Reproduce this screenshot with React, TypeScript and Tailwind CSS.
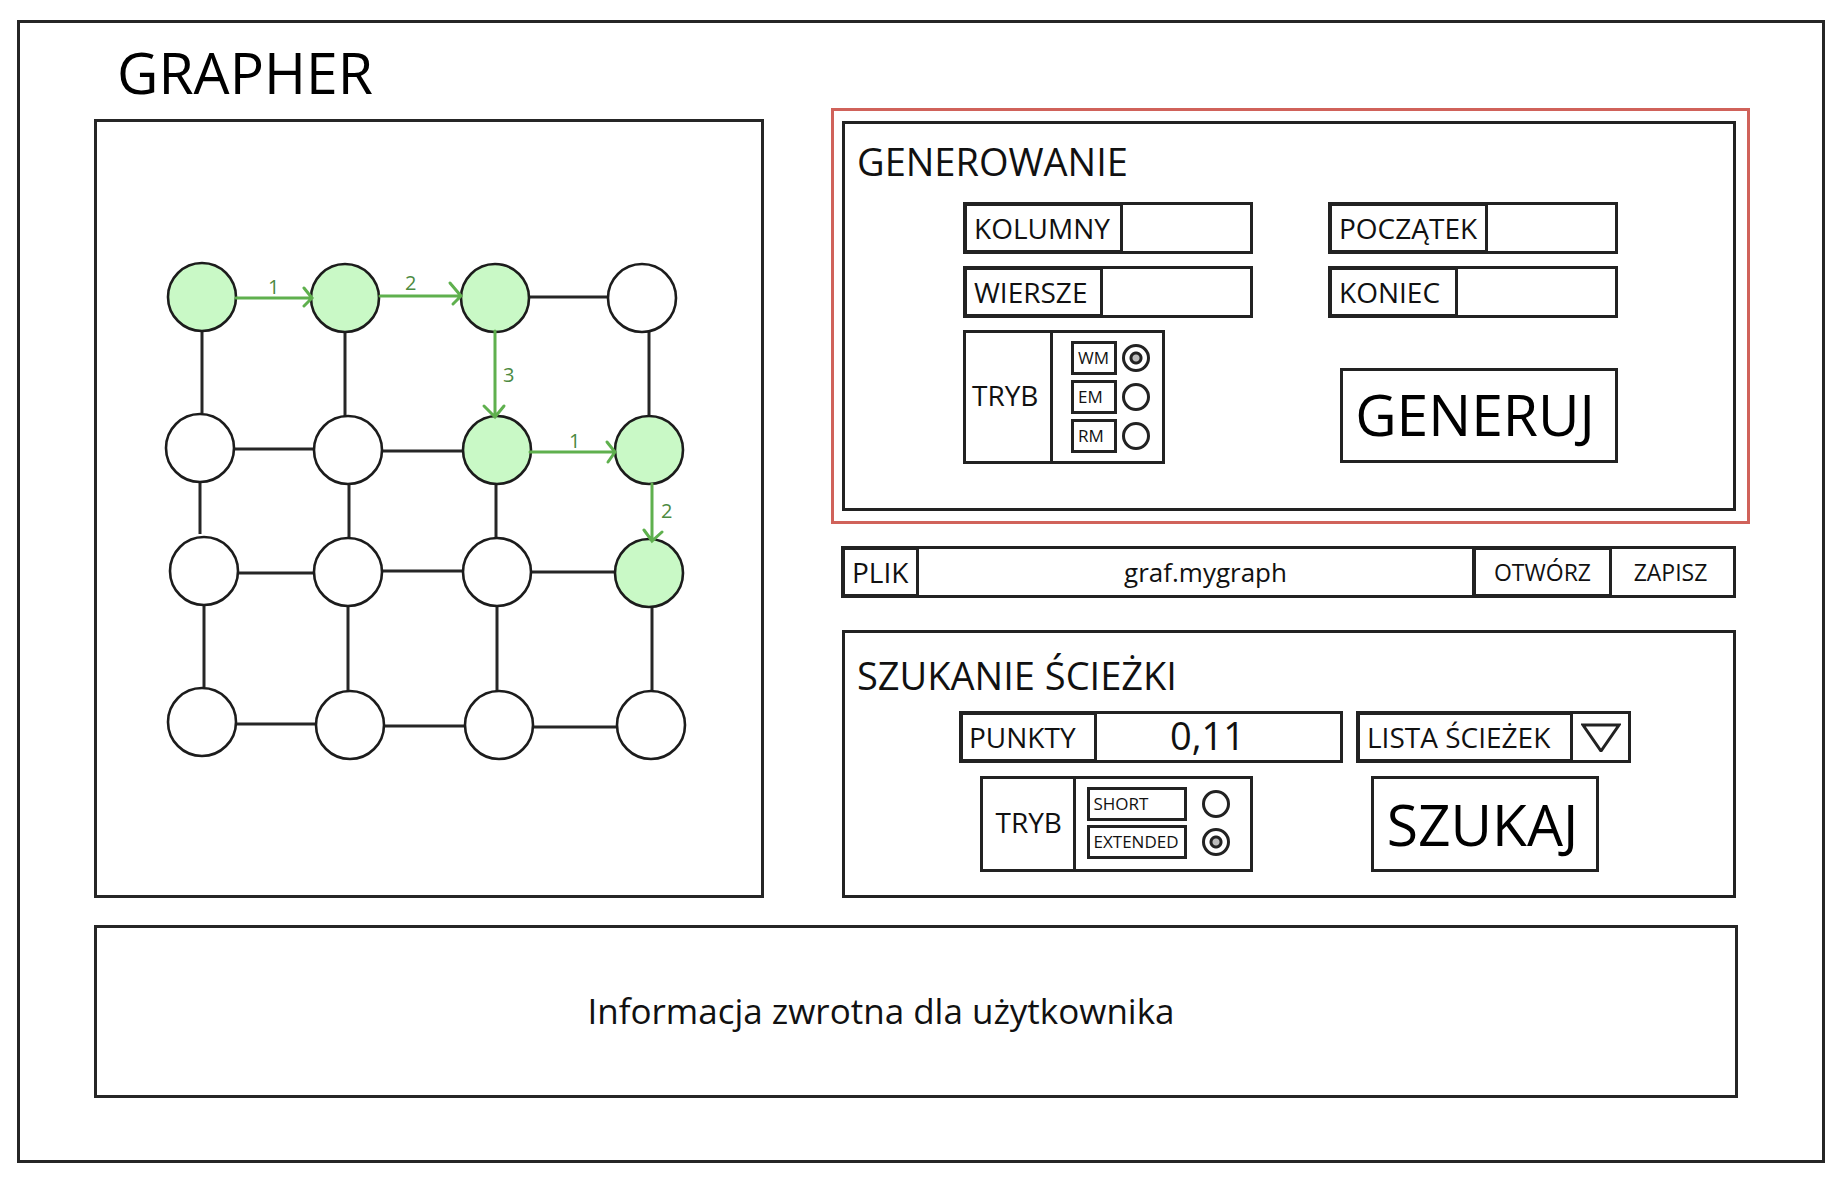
import type { ReactNode } from "react";

type Point = [number, number];

const NODES: { at: Point; visited?: boolean }[] = [
  { at: [202, 297], visited: true },
  { at: [345, 298], visited: true },
  { at: [495, 298], visited: true },
  { at: [642, 298] },
  { at: [200, 448] },
  { at: [348, 450] },
  { at: [497, 450], visited: true },
  { at: [649, 450], visited: true },
  { at: [204, 571] },
  { at: [348, 572] },
  { at: [497, 572] },
  { at: [649, 573], visited: true },
  { at: [202, 722] },
  { at: [350, 725] },
  { at: [499, 725] },
  { at: [651, 725] },
];

const EDGES: [number, number, number, number][] = [
  [530, 297, 608, 297],
  [234, 449, 314, 449],
  [382, 451, 462, 451],
  [239, 573, 314, 573],
  [382, 571, 463, 571],
  [531, 572, 614, 572],
  [236, 724, 316, 724],
  [384, 726, 464, 726],
  [532, 727, 616, 727],
  [202, 331, 202, 413],
  [345, 332, 345, 416],
  [649, 331, 649, 416],
  [200, 481, 200, 534],
  [349, 484, 349, 538],
  [496, 484, 496, 538],
  [204, 605, 204, 687],
  [348, 607, 348, 691],
  [497, 607, 497, 691],
  [652, 607, 652, 691],
];

const STEPS: { path: string; label: string; at: Point }[] = [
  { path: "M236 298H312M304 288L312 298L304 306", label: "1", at: [268, 294] },
  { path: "M380 296H460M450 283L461 296L453 304", label: "2", at: [405, 290] },
  { path: "M495 331V417M484 406L495 417L504 406", label: "3", at: [503, 382] },
  { path: "M530 452H615M607 442L615 452L608 462", label: "1", at: [569, 448] },
  { path: "M652 484V540M644 530L652 541L662 532", label: "2", at: [661, 518] },
];

function Graph() {
  return (
    <svg viewBox="97 122 664 773" className="block h-auto w-full" role="img" aria-label="Graf">
      <g stroke="#262626" strokeWidth="3">
        {EDGES.map(([x1, y1, x2, y2]) => (
          <line key={`${x1}-${y1}-${x2}`} x1={x1} y1={y1} x2={x2} y2={y2} />
        ))}
      </g>
      {NODES.map(({ at: [cx, cy], visited }) => (
        <circle
          key={`${cx}-${cy}`}
          cx={cx}
          cy={cy}
          r="34"
          fill={visited ? "#c9f9c6" : "#ffffff"}
          stroke="#1c1c1c"
          strokeWidth="2.6"
        />
      ))}
      {STEPS.map(({ path, label, at: [x, y] }) => (
        <g key={path}>
          <path d={path} fill="none" stroke="#5fb04e" strokeWidth="3" strokeLinecap="round" />
          <text x={x} y={y} fill="#4c8a41" className="text-[20px]">
            {label}
          </text>
        </g>
      ))}
    </svg>
  );
}

function Field({ id, label, width }: { id: string; label: string; width: string }) {
  return (
    <div className="flex h-[52px] border-[3px] border-[#222]">
      <label
        htmlFor={id}
        className={`flex shrink-0 items-center border border-r-[3px] border-[#222] pl-[7px] text-[28px] ${width}`}
      >
        {label}
      </label>
      <input id={id} type="text" className="min-w-0 flex-1 px-2 text-[28px] outline-none" />
    </div>
  );
}

function Option({
  name,
  label,
  checked,
  box,
  gap,
}: {
  name: string;
  label: string;
  checked?: boolean;
  box: string;
  gap: string;
}) {
  return (
    <label className={`flex items-center ${gap}`}>
      <span
        className={`flex h-[34px] items-center border-[3px] border-[#222] pl-1 text-[17px] ${box}`}
      >
        {label}
      </span>
      <input
        type="radio"
        name={name}
        defaultChecked={checked}
        className="size-7 appearance-none rounded-full border-[3px] border-[#222] checked:bg-[radial-gradient(circle,#bbb_3px,#222_4px,#222_6px,#fff_7px)]"
      />
    </label>
  );
}

function Mode({ label, children }: { label: string; children: ReactNode }) {
  return (
    <div role="radiogroup" aria-label="TRYB" className="flex border-[3px] border-[#222]">
      <div
        className={`flex items-center border-r-[3px] border-[#222] pb-1 text-[28px] ${label}`}
      >
        TRYB
      </div>
      {children}
    </div>
  );
}

export default function App() {
  return (
    <div className="flex min-h-screen bg-white pt-[20px] pr-[15px] pb-[15px] pl-[17px] font-['Open_Sans','Noto_Sans',sans-serif] text-[#111]">
      <main className="flex flex-1 flex-col border-[3px] border-[#262626] pr-[72px] pb-[62px] pl-[74px]">
        <header className="h-[85px] pt-[17px] pl-[23px]">
          <h1 className="text-[57px] leading-[64px] text-black">GRAPHER</h1>
        </header>

        <div className="grid grid-cols-[670fr_919fr] gap-x-[67px]">
          <section className="mt-[11px] border-[3px] border-[#262626]">
            <Graph />
          </section>

          <div className="flex flex-col">
            <div className="border-[3px] border-[#d0625a] py-[10px] pr-[11px] pl-2">
              <section className="h-[390px] border-[3px] border-[#222] pt-3">
                <h2 className="mb-4 pl-3 text-[38px] leading-[50px]">GENEROWANIE</h2>
                <div className="flex justify-center gap-[75px] pl-[3px]">
                  <div className="flex w-[290px] flex-col gap-3">
                    <Field id="columns" label="KOLUMNY" width="w-[157px]" />
                    <Field id="rows" label="WIERSZE" width="w-[137px]" />
                    <div className="flex">
                      <Mode label="w-[87px] pl-[6px]">
                        <div className="flex w-[109px] flex-col items-end gap-[5px] pt-2 pr-3 pb-2">
                          <Option name="gen" label="WM" checked box="w-[46px]" gap="gap-[5px]" />
                          <Option name="gen" label="EM" box="w-[46px]" gap="gap-[5px]" />
                          <Option name="gen" label="RM" box="w-[46px]" gap="gap-[5px]" />
                        </div>
                      </Mode>
                    </div>
                  </div>
                  <div className="flex w-[290px] flex-col gap-3">
                    <Field id="start" label="POCZĄTEK" width="w-[157px]" />
                    <Field id="end" label="KONIEC" width="w-[127px]" />
                    <button
                      type="button"
                      className="mt-[38px] h-[95px] w-[278px] self-end border-[3px] border-[#222] pr-2 pb-[3px] text-[57px] leading-[64px] text-black"
                    >
                      GENERUJ
                    </button>
                  </div>
                </div>
              </section>
            </div>

            <div className="mt-[22px] mr-[14px] ml-[10px] flex h-[52px] border-[3px] border-[#222]">
              <label
                htmlFor="file"
                className="flex w-[75px] items-center border border-r-[3px] border-[#222] pl-[7px] text-[28px]"
              >
                PLIK
              </label>
              <input
                id="file"
                type="text"
                defaultValue="graf.mygraph"
                className="min-w-0 flex-1 pl-5 text-center text-[26px] outline-none"
              />
              <button
                type="button"
                className="w-[140px] border border-r-[3px] border-l-[4px] border-[#222] text-[23px]"
              >
                OTWÓRZ
              </button>
              <button type="button" className="w-[121px] pr-1 text-[23px]">
                ZAPISZ
              </button>
            </div>

            <section className="mt-[32px] mr-[14px] ml-[11px] flex-1 border-[3px] border-[#222] pt-[17px]">
              <h2 className="mb-[11px] pl-3 text-[38px] leading-[50px]">SZUKANIE ŚCIEŻKI</h2>
              <div className="flex justify-center gap-[13px] pl-3">
                <div className="flex h-[52px] w-[384px] border-[3px] border-[#222]">
                  <label
                    htmlFor="points"
                    className="flex w-[135px] shrink-0 items-center border border-r-[3px] border-[#222] pl-[6px] text-[28px]"
                  >
                    PUNKTY
                  </label>
                  <input
                    id="points"
                    type="text"
                    defaultValue="0,11"
                    className="min-w-0 flex-1 pr-[22px] pb-[3px] text-center text-[38px] leading-[43px] outline-none"
                  />
                </div>
                <div className="relative flex h-[52px] w-[275px] border-[3px] border-[#222]">
                  <select
                    aria-label="LISTA ŚCIEŻEK"
                    className="w-full appearance-none border border-[#222] pl-[7px] text-[28px] outline-none"
                  >
                    <option>LISTA ŚCIEŻEK</option>
                  </select>
                  <span className="pointer-events-none absolute inset-y-0 right-0 flex w-[58px] items-center justify-center border-l-[3px] border-[#222] bg-white">
                    <svg viewBox="0 0 40 30" className="h-[30px] w-10" aria-hidden="true">
                      <path d="M2 3H38L20 29Z" fill="none" stroke="#222" strokeWidth="3" />
                    </svg>
                  </span>
                </div>
              </div>
              <div className="mt-[13px] flex justify-center gap-[118px]">
                <Mode label="w-[93px] pl-[13px]">
                  <div className="flex w-[174px] flex-col justify-center gap-[4px] pb-[2px] pl-[11px]">
                    <Option name="search" label="SHORT" box="w-[100px]" gap="gap-[15px]" />
                    <Option name="search" label="EXTENDED" checked box="w-[100px]" gap="gap-[15px]" />
                  </div>
                </Mode>
                <button
                  type="button"
                  className="h-[96px] w-[228px] border-[3px] border-[#222] pr-1 text-[57px] leading-[64px] text-black"
                >
                  SZUKAJ
                </button>
              </div>
            </section>
          </div>
        </div>

        <section className="mt-[27px] mr-3 flex h-[173px] items-center justify-center border-[3px] border-[#262626] pr-[70px]">
          <p className="text-[35px]">Informacja zwrotna dla użytkownika</p>
        </section>
      </main>
    </div>
  );
}
